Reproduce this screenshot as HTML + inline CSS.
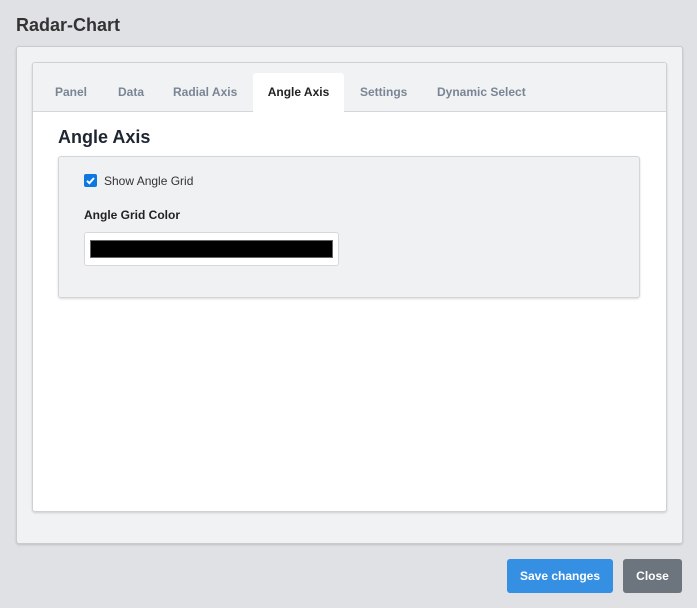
<!DOCTYPE html>
<html><head><style>
*{box-sizing:border-box;margin:0;padding:0}
body{width:697px;height:608px;background:#dfe1e5;font-family:"Liberation Sans",Arial,sans-serif;position:relative;overflow:hidden}
.a{position:absolute}
h1{position:absolute;left:16px;top:15px;font-size:18px;font-weight:bold;color:#333}
.outer{left:16px;top:46px;width:667px;height:498px;background:#f1f2f4;border:1px solid #c9cbcf;border-radius:3px;box-shadow:0 1px 2px rgba(0,0,0,.15)}
.card{left:32px;top:62px;width:635px;height:450px;background:#fff;border:1px solid #cfd1d5;border-radius:3px;box-shadow:0 1px 2px rgba(0,0,0,.15);overflow:hidden}
.tabs{left:0;top:0;width:100%;height:49px;background:#f1f2f4;border-bottom:1px solid #d4d6da}
.tab{position:absolute;top:22px;font-size:12px;font-weight:bold;color:#7a8594}
.act{position:absolute;left:220px;top:10px;width:91px;height:39px;background:#fff;border-radius:3px 3px 0 0;color:#222;font-size:12px;font-weight:bold;text-align:center;padding-top:12px}
.panel{left:58px;top:156px;width:582px;height:142px;background:#f0f1f3;border:1px solid #d3d5d9;border-radius:3px;box-shadow:0 1px 2px rgba(0,0,0,.15)}
.btn{top:559px;height:34px;border-radius:3px;color:#fff;font-size:12px;font-weight:bold;text-align:center;line-height:34px}
</style></head><body>
<h1>Radar-Chart</h1>
<div class="a outer"></div>
<div class="a card">
 <div class="a tabs">
  <span class="tab" style="left:22px">Panel</span>
  <span class="tab" style="left:85px">Data</span>
  <span class="tab" style="left:140px">Radial Axis</span>
  <div class="act">Angle Axis</div>
  <span class="tab" style="left:327px">Settings</span>
  <span class="tab" style="left:404px">Dynamic Select</span>
 </div>
 <div class="a" style="left:25px;top:64px;font-size:18px;font-weight:bold;color:#1e2633">Angle Axis</div>
</div>
<div class="a panel"></div>
<div class="a" style="left:84px;top:174px;width:13px;height:13px;background:#0d78e0;border-radius:2px">
 <svg width="13" height="13" viewBox="0 0 13 13"><path d="M3 6.8L5.4 9.2 10 4" stroke="#fff" stroke-width="2" fill="none"/></svg>
</div>
<div class="a" style="left:104px;top:174px;font-size:12px;color:#333">Show Angle Grid</div>
<div class="a" style="left:84px;top:208px;font-size:12px;font-weight:bold;color:#222">Angle Grid Color</div>
<div class="a" style="left:84px;top:232px;width:255px;height:34px;background:#fff;border:1px solid #d6d8dc;border-radius:3px"></div>
<div class="a" style="left:90px;top:240px;width:243px;height:18px;background:#000;border:1px solid #666"></div>
<div class="a btn" style="left:507px;width:106px;background:#3590e3">Save changes</div>
<div class="a btn" style="left:623px;width:59px;background:#6c757d">Close</div>
</body></html>
